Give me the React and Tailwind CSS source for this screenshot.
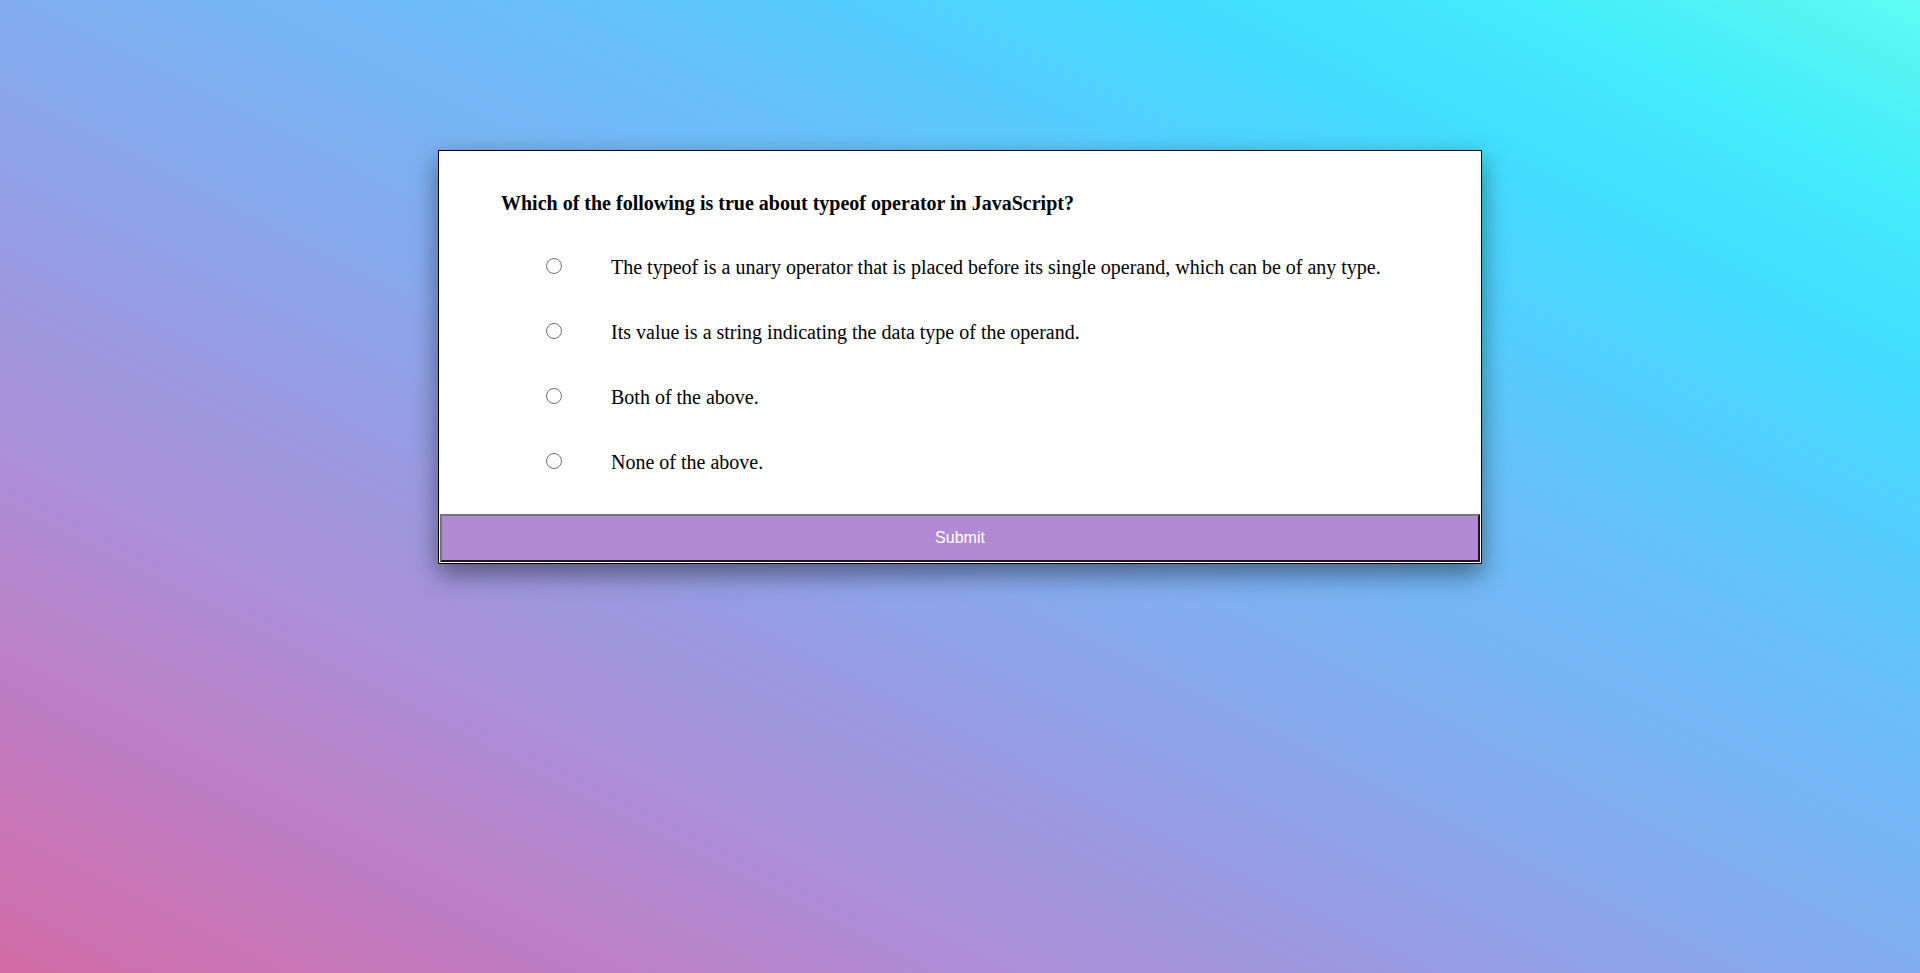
import { useState } from "react";

const options = [
  "The typeof is a unary operator that is placed before its single operand, which can be of any type.",
  "Its value is a string indicating the data type of the operand.",
  "Both of the above.",
  "None of the above.",
];

export default function App() {
  const [selected, setSelected] = useState(null);

  return (
    <div className="min-h-screen w-full bg-[linear-gradient(to_top_right,#d16ba5,#c777b9,#ba83ca,#aa8fd8,#9a9ae1,#8aa7ec,#79b3f4,#69bff8,#52cffe,#41dfff,#46eefa,#5ffbf1)] pt-[150px] font-['Liberation_Serif',serif]">
      <div className="mx-auto w-[1044px] border border-black bg-white shadow-[0_10px_24px_rgba(0,0,0,0.45)]">
        <h3 className="pl-[62px] pt-[39px] text-[20px] font-bold leading-[26px] text-black">
          Which of the following is true about typeof operator in JavaScript?
        </h3>

        <ul className="mt-[18px]">
          {options.map((option, index) => (
            <li key={index} className="flex h-[65px] items-center pl-[107px]">
              <label className="flex cursor-pointer items-center">
                <input
                  type="radio"
                  name="answer"
                  checked={selected === index}
                  onChange={() => setSelected(index)}
                  className="mb-[2px] h-4 w-4 shrink-0 appearance-none rounded-full border border-[#6e6e6e] bg-white checked:border-[5px] checked:border-[#0075ff]"
                />
                <span className="ml-[49px] text-[20px] leading-[22px] text-black">{option}</span>
              </label>
            </li>
          ))}
        </ul>

        <button
          type="button"
          className="m-px mt-[20px] block h-[48px] w-[calc(100%-2px)] border-2 border-t-[#767676] border-l-[#767676] border-b-[#1a1a1a] border-r-[#1a1a1a] bg-[#b28ad3] font-['Liberation_Sans',Arial,sans-serif] text-[16px] text-white"
        >
          Submit
        </button>
      </div>
    </div>
  );
}
